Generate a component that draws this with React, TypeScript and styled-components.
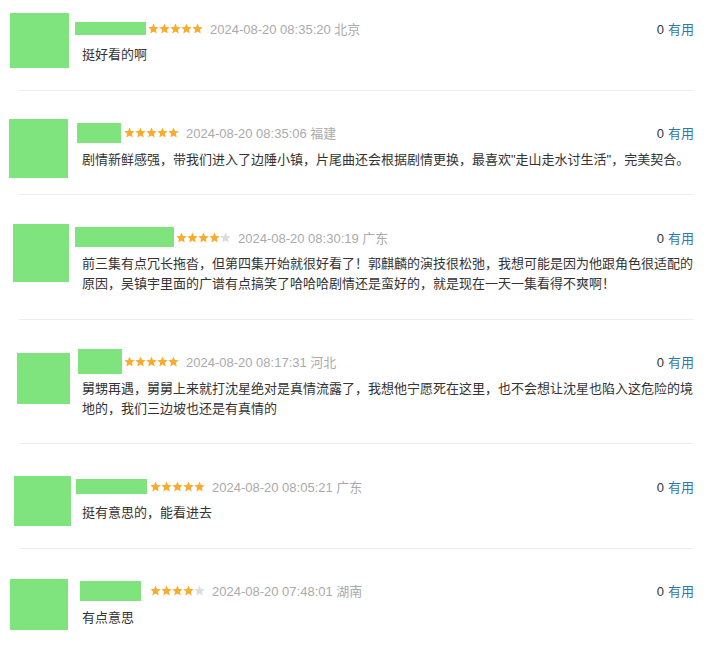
import React from 'react';
import styled, { createGlobalStyle } from 'styled-components';

interface Comment {
  id: number;
  rating: number;
  time: string;
  place: string;
  text: string;
  avatar: { x: number; dy: number; w: number; h: number };
  name: { x: number; w: number; h: number; stars: number };
}

const comments: Comment[] = [
  {
    id: 1,
    rating: 5,
    time: '2024-08-20 08:35:20',
    place: '北京',
    text: '挺好看的啊',
    avatar: { x: 10, dy: -5, w: 59, h: 55 },
    name: { x: 75, w: 71, h: 13, stars: 148 },
  },
  {
    id: 2,
    rating: 5,
    time: '2024-08-20 08:35:06',
    place: '福建',
    text: '剧情新鲜感强，带我们进入了边陲小镇，片尾曲还会根据剧情更换，最喜欢"走山走水讨生活"，完美契合。',
    avatar: { x: 9, dy: -4, w: 59, h: 59 },
    name: { x: 77, w: 44, h: 20, stars: 124 },
  },
  {
    id: 3,
    rating: 4,
    time: '2024-08-20 08:30:19',
    place: '广东',
    text: '前三集有点冗长拖沓，但第四集开始就很好看了！郭麒麟的演技很松弛，我想可能是因为他跟角色很适配的原因，吴镇宇里面的广谱有点搞笑了哈哈哈剧情还是蛮好的，就是现在一天一集看得不爽啊！',
    avatar: { x: 13, dy: -3, w: 56, h: 58 },
    name: { x: 75, w: 99, h: 20, stars: 176 },
  },
  {
    id: 4,
    rating: 5,
    time: '2024-08-20 08:17:31',
    place: '河北',
    text: '舅甥再遇，舅舅上来就打沈星绝对是真情流露了，我想他宁愿死在这里，也不会想让沈星也陷入这危险的境地的，我们三边坡也还是有真情的',
    avatar: { x: 17, dy: 1, w: 53, h: 51 },
    name: { x: 78, w: 44, h: 25, stars: 124 },
  },
  {
    id: 5,
    rating: 5,
    time: '2024-08-20 08:05:21',
    place: '广东',
    text: '挺有意思的，能看进去',
    avatar: { x: 14, dy: 0, w: 57, h: 50 },
    name: { x: 76, w: 71, h: 15, stars: 150 },
  },
  {
    id: 6,
    rating: 4,
    time: '2024-08-20 07:48:01',
    place: '湖南',
    text: '有点意思',
    avatar: { x: 10, dy: -2, w: 58, h: 51 },
    name: { x: 80, w: 61, h: 20, stars: 150 },
  },
];

const BODY_LEFT = 82;

const GlobalStyle = createGlobalStyle`
  html, body {
    margin: 0;
    padding: 0;
    overflow: hidden;
    background: #fff;
  }
  body {
    font-family: "Liberation Sans", Arial, "Noto Sans CJK SC", sans-serif;
    font-size: 13px;
    color: #333;
  }
`;

const List = styled.div`
  width: 719px;
`;

const Item = styled.div<{ $first: boolean }>`
  display: flex;
  align-items: flex-start;
  padding: ${({ $first }) => ($first ? '18px' : '32px')} 25px 24.5px 0;
`;

// redaction boxes don't push the row height
const AvatarSlot = styled.div`
  flex: none;
  width: ${BODY_LEFT}px;
  height: 0;
`;

const Avatar = styled.div<{ $x: number; $dy: number; $w: number; $h: number }>`
  width: ${({ $w }) => $w}px;
  height: ${({ $h }) => $h}px;
  margin-left: ${({ $x }) => $x}px;
  margin-top: ${({ $dy }) => $dy}px;
  background: #7fe37e;
`;

const Body = styled.div`
  flex: 1;
  min-width: 0;
`;

const Header = styled.div`
  display: flex;
  align-items: center;
  height: 20px;
  white-space: nowrap;
`;

const NameBox = styled.div<{ $ml: number; $mr: number; $w: number; $h: number }>`
  flex: none;
  width: ${({ $w }) => $w}px;
  height: ${({ $h }) => $h}px;
  margin-left: ${({ $ml }) => $ml}px;
  margin-right: ${({ $mr }) => $mr}px;
  background: #7fe37e;
`;

const StarRow = styled.span`
  display: inline-flex;
  flex: none;
`;

const Meta = styled.span`
  margin-left: 7px;
  color: #aaa;
  font-size: 13px;
`;

const Useful = styled.span`
  margin-left: auto;
  font-size: 13px;
  color: #333;
`;

const UsefulLink = styled.a`
  color: #37a;
  text-decoration: none;
  margin-left: 4px;
`;

const Content = styled.p`
  margin: 7px 0 0;
  line-height: 20px;
  font-size: 13px;
  color: #333;
`;

const Divider = styled.div`
  height: 1px;
  background: #eee;
  margin: 0 25px 0 19px;
`;

const Star = ({ on }: { on: boolean }) => (
  <svg width="11" height="11" viewBox="0.5 0.5 23 22">
    <path
      d="M12 1L15.06 8.29 22.94 8.95 16.95 14.11 18.76 21.8 12 17.7 5.24 21.8 7.05 14.11 1.06 8.95 8.94 8.29Z"
      fill={on ? '#fbab2c' : '#ddd'}
    />
  </svg>
);

const Stars = ({ n }: { n: number }) => (
  <StarRow>
    {[1, 2, 3, 4, 5].map((i) => (
      <Star key={i} on={i <= n} />
    ))}
  </StarRow>
);

export default function App() {
  return (
    <List>
      <GlobalStyle />
      {comments.map((c, i) => (
        <React.Fragment key={c.id}>
          {i > 0 && <Divider />}
          <Item $first={i === 0}>
            <AvatarSlot>
              <Avatar $x={c.avatar.x} $dy={c.avatar.dy} $w={c.avatar.w} $h={c.avatar.h} />
            </AvatarSlot>
            <Body>
              <Header>
                <NameBox
                  $ml={c.name.x - BODY_LEFT}
                  $mr={c.name.stars - c.name.x - c.name.w}
                  $w={c.name.w}
                  $h={c.name.h}
                />
                <Stars n={c.rating} />
                <Meta>
                  {c.time} {c.place}
                </Meta>
                <Useful>
                  0<UsefulLink href="#">有用</UsefulLink>
                </Useful>
              </Header>
              <Content>{c.text}</Content>
            </Body>
          </Item>
        </React.Fragment>
      ))}
    </List>
  );
}
